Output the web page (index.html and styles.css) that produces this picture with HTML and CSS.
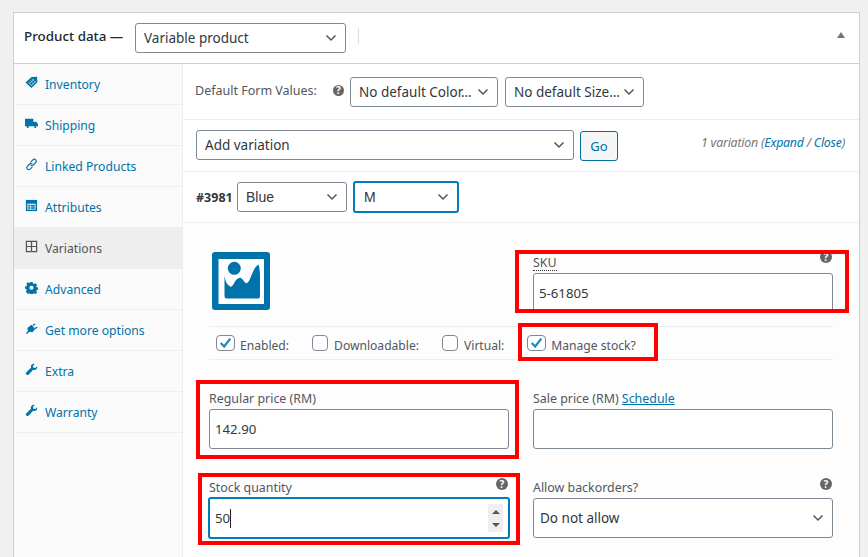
FILE: index.html
```html
<!DOCTYPE html>
<html lang="en">
<head>
<meta charset="utf-8">
<title>Product data</title>
<link rel="stylesheet" href="styles.css">
</head>
<body>
<section class="panel">
  <header class="panel-head">
    <span class="panel-title">Product data —</span>
    <select class="sel sel-type"><option>Variable product</option></select>
    <span class="head-sep"></span>
    <span class="collapse"></span>
  </header>
  <div class="panel-body">
    <nav class="tabs">
      <a class="tab"><svg class="ico" viewBox="0 0 14 14"><path d="M.5 7L7 1l6-.3.3 6L7 13z"/><path class="cut" d="M3.500 6.500l4.500 4.500M5.500 4.700l4.500 4.500M7.500 3l4 4M4.500 8.500l5-5M6.500 10.500l5-5"/></svg>Inventory</a>
      <a class="tab"><svg class="ico" viewBox="0 0 14 14"><path d="M0 2h9v8H0zM9 5h3l2 2.500V10H9z"/><circle cx="3" cy="10.800" r="1.200"/><circle cx="11" cy="10.800" r="1.200"/></svg>Shipping</a>
      <a class="tab"><svg class="ico ico-line" viewBox="0 0 14 14"><path d="M6 4.500L8.500 2a2 2 0 0 1 3 3L9 7.500a2 2 0 0 1-3 0"/><path d="M8 9.500L5.500 12a2 2 0 0 1-3-3L5 6.500a2 2 0 0 1 3 0"/></svg>Linked Products</a>
      <a class="tab"><svg class="ico" viewBox="0 0 14 14"><path d="M1 1h12v12H1z"/><path class="cut-fill" d="M2.500 5h9v6.500h-9z"/><path d="M3.500 6.500h2v1.500h-2zM3.500 9h2v1.500h-2zM6.500 6.500h4v1.500h-4zM6.500 9h4v1.500h-4z"/></svg>Attributes</a>
      <a class="tab tab-on"><svg class="ico ico-grid" viewBox="0 0 14 14"><path d="M1.500 1.500h11v11h-11zM7 1.500v11M1.500 7h11"/></svg>Variations</a>
      <a class="tab"><svg class="ico" viewBox="0 0 14 14"><path fill-rule="evenodd" d="M5.700 1h2.600l.3 1.700 1.100.5 1.500-.9 1.800 1.800-.9 1.500.5 1.100 1.700.3v2.400l-1.700.3-.5 1.100.9 1.500-1.800 1.800-1.500-.9-1.100.5-.3 1.700H5.700l-.3-1.700-1.100-.5-1.500.9L1 11.300l.9-1.500-.5-1.100L0 8.400V6l1.700-.3.500-1.100-.9-1.500L3 1.300l1.500.9 1.100-.5zM7 5a2.200 2.200 0 1 0 0 4.400A2.200 2.200 0 0 0 7 5z"/></svg>Advanced</a>
      <a class="tab"><svg class="ico" viewBox="0 0 14 14"><path d="M1 12.500l2.200-3L2.500 6.500 7 3l4 4.500-3 3.500-3-.5-3 2.500zM8 3l2.500-1.500.7.800L9 4.200zM10.500 6.200l2.500-1 .5 1-2.200 1.500z"/></svg>Get more options</a>
      <a class="tab"><svg class="ico" viewBox="0 0 14 14"><path d="M13 3.500c.4 1.700-.4 3.200-1.800 3.800-.9.400-1.700.3-2.400 0L4 12.300c-.8.800-2 .8-2.600.1-.7-.7-.6-1.800.1-2.500l5-4.700c-.3-.8-.3-1.700.1-2.500C7.300 1.300 8.900.6 10.500 1L8.600 3l.5 2 2 .5z"/></svg>Extra</a>
      <a class="tab"><svg class="ico" viewBox="0 0 14 14"><path d="M13 3.500c.4 1.700-.4 3.200-1.800 3.800-.9.400-1.700.3-2.400 0L4 12.300c-.8.800-2 .8-2.600.1-.7-.7-.6-1.800.1-2.500l5-4.700c-.3-.8-.3-1.700.1-2.500C7.300 1.300 8.900.6 10.500 1L8.600 3l.5 2 2 .5z"/></svg>Warranty</a>
    </nav>
    <div class="main">
      <div class="row row-defaults">
        <span class="row-label">Default Form Values:</span>
        <span class="help help-row">?</span>
        <select class="sel sel-color"><option>No default Color…</option></select>
        <select class="sel sel-size"><option>No default Size…</option></select>
      </div>
      <div class="row row-add">
        <select class="sel sel-add"><option>Add variation</option></select>
        <button class="go" type="button">Go</button>
        <span class="count">1 variation (<a>Expand</a> / <a>Close</a>)</span>
      </div>
      <div class="row row-var">
        <strong class="var-id">#3981</strong>
        <select class="sel sel-arial sel-blue"><option>Blue</option></select>
        <select class="sel sel-arial sel-m"><option>M</option></select>
      </div>
      <div class="var-body">
        <div class="form-grid">
          <div class="thumb">
            <svg class="thumb-svg" viewBox="0 0 58 58"><rect width="58" height="58" rx="3" fill="#0073aa"/><rect x="6.500" y="7" width="45.500" height="45" fill="#fff"/><circle cx="22.300" cy="16.300" r="6.500" fill="#0073aa"/><path d="M12.500 23C13 30 16 34 19 34.700 22 34 23 26 28 25.700 31 26 32 31 34.700 31.300 39 30 40 16 46.500 12.500 47.500 15 48 20 48 24V44Q48 46.500 46 46.500H14.500Q12.500 46.500 12.500 44Z" fill="#0073aa"/></svg>
          </div>
          <div class="field field-sku">
            <div class="label-line"><span class="lbl lbl-dotted">SKU</span><span class="help">?</span></div>
            <input class="inp" value="5-61805">
          </div>
          <div class="opts">
            <label class="opt"><span class="chk on"><svg viewBox="0 0 18 16"><path d="M3.500 8l4 4 7-9" /></svg></span>Enabled:</label>
            <label class="opt"><span class="chk"></span>Downloadable:</label>
            <label class="opt"><span class="chk"></span>Virtual:</label>
            <label class="opt"><span class="chk on"><svg viewBox="0 0 18 16"><path d="M3.500 8l4 4 7-9" /></svg></span>Manage stock?</label>
          </div>
          <div class="field">
            <div class="label-line"><span class="lbl">Regular price (RM)</span></div>
            <input class="inp" value="142.90">
          </div>
          <div class="field">
            <div class="label-line"><span class="lbl">Sale price (RM) <a class="sched">Schedule</a></span></div>
            <input class="inp" value="">
          </div>
          <div class="field">
            <div class="label-line"><span class="lbl">Stock quantity</span><span class="help">?</span></div>
            <div class="inp inp-focus"><span>50</span><span class="caret"></span><span class="spin"><i class="up"></i><i class="down"></i></span></div>
          </div>
          <div class="field">
            <div class="label-line"><span class="lbl">Allow backorders?</span><span class="help">?</span></div>
            <select class="sel sel-back"><option>Do not allow</option></select>
          </div>
        </div>
      </div>
    </div>
  </div>
</section>
<div class="mark mark-sku"></div>
<div class="mark mark-stock"></div>
<div class="mark mark-price"></div>
<div class="mark mark-qty"></div>
</body>
</html>
```

FILE: styles.css
```css
* { box-sizing: border-box; }
html, body { height: 100%; }
body {
  margin: 0;
  padding: 12px 8px 0 13px;
  background: #f0f0f1;
  font-family: "Noto Sans", "Open Sans", sans-serif;
  font-size: 12px;
  color: #50575e;
  overflow: hidden;
  position: relative;
}
.panel {
  width: 847px;
  height: 600px;
  background: #fff;
  border: 1px solid #ccd0d4;
  display: flex;
  flex-direction: column;
}
.panel-head {
  height: 51px;
  flex: none;
  display: flex;
  align-items: center;
  padding: 0 14px 0 10px;
  border-bottom: 1px solid #ccd0d4;
}
.panel-title { font-size: 13.400px; font-weight: 500; color: #23282d; width: 111px; margin-bottom: 4px; }
.head-sep { width: 1px; height: 16px; background: #ddd; margin: 0 0 4px 12px; }
.collapse {
  margin: 0 0 6px auto;
  border: 4px solid transparent;
  border-top: 0;
  border-bottom: 6px solid #72777c;
}
.panel-body { flex: 1; display: flex; }
.tabs {
  width: 169px;
  flex: none;
  background: #fafafa;
  border-right: 1px solid #eee;
  display: flex;
  flex-direction: column;
  font-size: 12.150px;
}
.tab {
  height: 41px;
  flex: none;
  display: flex;
  align-items: center;
  padding: 0 0 0 11px;
  gap: 7px;
  color: #0073aa;
  border-bottom: 1px solid #eee;
}
.tab-on { background: #eee; color: #555; border-bottom-color: #eee; }
.ico { width: 13px; height: 13px; flex: none; fill: #0073aa; margin-top: -3px; }
.ico .cut { fill: none; stroke: #bcd8e8; stroke-width: .8; }
.ico .cut-fill { fill: #cfe3ee; }
.ico-line { fill: none; stroke: #0073aa; stroke-width: 1.300; }
.ico-grid { fill: none; stroke: #555; stroke-width: 1.300; }
.main { flex: 1; min-width: 0; display: flex; flex-direction: column; }
.row { display: flex; align-items: center; border-bottom: 1px solid #eee; flex: none; }
.row-defaults { height: 56px; padding: 0 0 0 12px; }
.row-label { width: 138px; margin-bottom: 2px; font-size: 12.500px; white-space: nowrap; }
.row-add { height: 52px; padding: 0 14px 0 13px; }
.row-var { height: 51px; padding: 0 0 0 13px; }
.sel {
  appearance: none;
  height: 30px;
  font: inherit;
  font-size: 13.500px;
  color: #32373c;
  background: #fff url("data:image/svg+xml,%3Csvg xmlns='http://www.w3.org/2000/svg' width='12' height='8' viewBox='0 0 12 8'%3E%3Cpath d='M1.500 1.500L6 6l4.500-4.500' fill='none' stroke='%23555' stroke-width='1.500'/%3E%3C/svg%3E") no-repeat right 8px center;
  border: 1px solid #7e8993;
  border-radius: 3px;
  padding: 0 24px 0 8px;
  margin: 0;
}
.sel-arial { font-family: "Liberation Sans", sans-serif; font-size: 14px; }
.sel-type { width: 211px; margin-top: -1px; }
.sel-color { width: 148px; margin-right: 7px; }
.sel-size { width: 139px; }
.sel-add { width: 378px; margin-top: -1px; }
.var-id { width: 37px; flex: none; font-size: 12.500px; color: #32373c; white-space: nowrap; }
.sel-blue { width: 110px; margin-left: 4px; }
.sel-m { width: 106px; height: 32px; margin-left: 6px; border: 2px solid #007cba; padding-left: 9px; }
.sel-back { width: 300px; height: 40px; padding-left: 6px; }
.go {
  width: 38px;
  height: 30px;
  margin: 1px 0 0 6px;
  padding: 0;
  font: inherit;
  font-size: 13px;
  color: #0071a1;
  background: #f3f5f6;
  border: 1px solid #0071a1;
  border-radius: 3px;
}
.count { margin: -7px 0 0 auto; font-size: 12.300px; font-style: italic; color: #777; letter-spacing: -.2px; }
.count a { color: #0073aa; }
.var-body { flex: 1; background: #fdfdfd; padding: 28px 0 0 26px; }
.form-grid { display: grid; grid-template-columns: 300px 300px; column-gap: 24px; }
.thumb { height: 75px; padding: 1px 0 0 3px; }
.thumb-svg { width: 58px; height: 58px; display: block; }
.label-line { display: flex; justify-content: space-between; align-items: flex-start; height: 22px; padding-top: 2px; font-size: 12.400px; }
.lbl { line-height: 20px; }
.lbl-dotted { border-bottom: 1px dotted #333; line-height: 15px; height: 16px; margin-top: 2px; }
.field { height: 89px; }
.field-sku { height: 75px; }
.field-sku .help { margin-top: -2px; }
.inp {
  display: block;
  width: 300px;
  height: 40px;
  font: inherit;
  font-size: 13.200px;
  color: #32373c;
  background: #fff;
  border: 1px solid #7e8993;
  border-radius: 3px;
  padding: 0 5px;
  margin: 0;
}
.inp-focus {
  display: flex;
  align-items: center;
  width: 302px;
  height: 42px;
  margin: -1px;
  border: 2px solid #007cba;
  padding: 0 5px;
}
.caret { width: 1px; height: 19px; background: #222; }
.spin {
  margin-left: auto;
  width: 15px;
  height: 28px;
  background: #efefef;
  display: flex;
  flex-direction: column;
  align-items: center;
  justify-content: center;
  gap: 9px;
}
.spin i { display: block; border: 4px solid transparent; }
.spin .up { border-top: 0; border-bottom: 4px solid #555; }
.spin .down { border-bottom: 0; border-top: 4px solid #555; }
.help {
  width: 12px;
  height: 12px;
  border-radius: 50%;
  background: #666;
  color: #fff;
  font-size: 10px;
  font-weight: 700;
  line-height: 12px;
  text-align: center;
  flex: none;
  margin: 0 1px 0 0;
}
.help-row { width: 11px; height: 11px; line-height: 11px; margin: -2px 6px 0 0; }
.sched { color: #0073aa; text-decoration: underline; }
.opts {
  grid-column: 1 / 3;
  height: 34px;
  margin-bottom: 27px;
  display: flex;
  align-items: center;
  gap: 23px;
  border-top: 1px solid #eee;
  border-bottom: 1px solid #eee;
  padding: 4px 0 0 7px;
  font-size: 12.100px;
}
.opt { display: flex; align-items: center; gap: 6px; flex: none; }
.chk {
  width: 16px;
  height: 16px;
  background: #fff;
  border: 1px solid #7e8993;
  border-radius: 4px;
  flex: none;
  margin-top: -4px;
  display: block;
}
.chk.on { width: 19px; margin-right: -1px; }
.chk svg { width: 17px; height: 14px; display: block; fill: none; stroke: #1e8cbe; stroke-width: 2.600; }
.mark { position: absolute; border: 4px solid #f00; }
.mark-sku { left: 515px; top: 250px; width: 334px; height: 63px; }
.mark-stock { left: 518px; top: 323px; width: 140px; height: 38px; }
.mark-price { left: 196px; top: 380px; width: 323px; height: 79px; }
.mark-qty { left: 198px; top: 473px; width: 322px; height: 72px; }
```
